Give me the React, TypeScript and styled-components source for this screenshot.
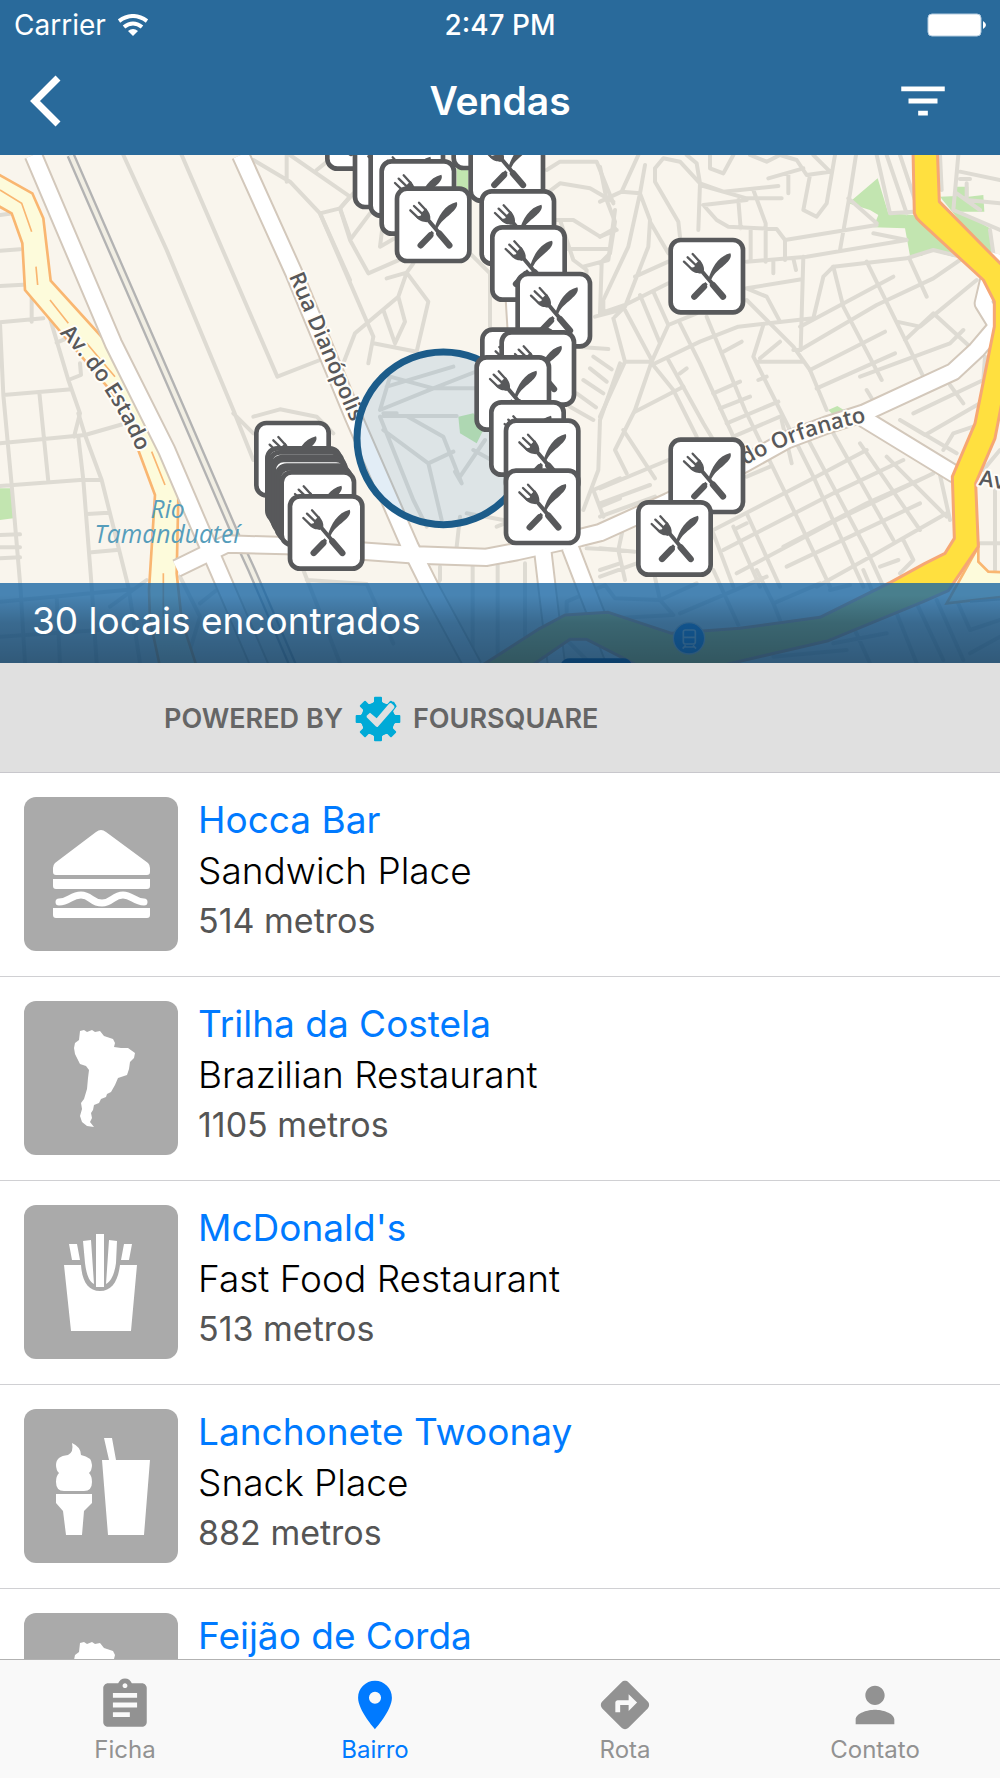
import React from "react";
import styled, { createGlobalStyle } from "styled-components";
import { MdAssignment, MdDirections, MdFilterList, MdPerson, MdPlace } from "react-icons/md";

const GlobalStyle = createGlobalStyle`
  *, *::before, *::after { box-sizing: border-box; }
  body {
    margin: 0;
    background: #fff;
    font-family: Inter, Roboto, "Liberation Sans", sans-serif;
  }
`;

const Screen = styled.div`
  display: flex;
  flex-direction: column;
  height: 100vh;
`;

const Header = styled.header`
  flex: none;
  background: #296a9b;
  color: #fff;
`;

const StatusBar = styled.div`
  display: grid;
  grid-template-columns: 1fr auto 1fr;
  align-items: center;
  height: 50px;
  padding: 0 14px;
  font-size: 28px;
  line-height: 34px;
`;

const Carrier = styled.span`
  display: flex;
  align-items: center;
  gap: 12px;
`;

const Clock = styled.time`
  font-weight: 500;
`;

const BatteryIcon = styled.svg`
  justify-self: end;
`;

const NavBar = styled.div`
  display: grid;
  grid-template-columns: 1fr auto 1fr;
  align-items: center;
  height: 105px;
  padding-bottom: 4px;
`;

const Title = styled.h1`
  margin: 0;
  font-size: 39px;
  line-height: 48px;
  font-weight: 600;
`;

const IconButton = styled.button<{ $end?: boolean }>`
  display: flex;
  justify-self: ${(p) => (p.$end ? "end" : "start")};
  padding: 0;
  margin: ${(p) => (p.$end ? "0 48px 0 0" : "0 0 0 30px")};
  border: 0;
  background: none;
  color: inherit;
  cursor: pointer;
`;

const MapPanel = styled.section`
  position: relative;
  flex: none;
  height: 508px;
  background: #f9f5ed;
`;

const MapCanvas = styled.svg`
  display: block;
  width: 100%;
  height: 100%;
`;

const ResultBanner = styled.p`
  position: absolute;
  inset: auto 0 0 0;
  margin: 0;
  padding: 14px 32px 18px;
  color: #fff;
  font-size: 37px;
  line-height: 48px;
  background:
    linear-gradient(rgba(0, 0, 0, 0) 15%, rgba(0, 0, 0, 0.2) 50%, rgba(0, 0, 0, 0.32)),
    rgba(22, 100, 163, 0.78);
`;

const Attribution = styled.div`
  flex: none;
  display: flex;
  align-items: center;
  gap: 12px;
  height: 110px;
  padding: 2px 164px 0;
  border-bottom: 1px solid #c8c7cc;
  background: #e0e0e0;
  color: #666;
  font-size: 27px;
  line-height: 32px;
  font-weight: 600;
`;

const PlaceList = styled.ul`
  flex: 1;
  min-height: 0;
  margin: 0;
  padding: 0;
  overflow-y: auto;
  scrollbar-width: none;
  list-style: none;
`;

const PlaceRow = styled.li`
  border-bottom: 1px solid #d0d0d3;
`;

const PlaceLink = styled.a`
  display: flex;
  gap: 20px;
  padding: 24px 24px 25px;
  color: #000;
  text-decoration: none;
`;

const Thumb = styled.svg`
  flex: none;
  width: 154px;
  height: 154px;
  border-radius: 12px;
  background: #aaa;
  fill: #fff;
`;

const PlaceText = styled.div`
  display: flex;
  flex-direction: column;
`;

const PlaceName = styled.span`
  color: #007aff;
  font-size: 37px;
  line-height: 46px;
`;

const PlaceKind = styled.span`
  font-size: 37px;
  line-height: 56px;
  font-weight: 300;
`;

const PlaceDistance = styled.span`
  color: #555;
  font-size: 34px;
  line-height: 44px;
`;

const TabBar = styled.nav`
  flex: none;
  display: grid;
  grid-template-columns: repeat(4, 1fr);
  height: 119px;
  border-top: 1px solid #b2b2b2;
  background: #f9f9f9;
`;

const Tab = styled.a<{ $active?: boolean }>`
  display: flex;
  flex-direction: column;
  align-items: center;
  padding-top: 16px;
  color: ${(p) => (p.$active ? "#007aff" : "#929292")};
  font-size: 24px;
  line-height: 32px;
  text-decoration: none;
`;

/* Map drawing, in units of a third of a pixel */

const Street = ({ d }: { d: string }) => (
  <path d={d} fill="none" stroke="#dedbd3" strokeWidth="12" strokeLinecap="round" strokeLinejoin="round" />
);

const avenues = [
  "M530 1705 L680 1632 L860 1637 L1250 1665 L1460 1672 L1550 1655 L1740 1613 L1800 1598 L2005 1505 L2235 1390 L2360 1320 L2480 1275 L2590 1240 L2860 1115 L2930 1050 L2985 985",
  "M100 465 L340 1030 L500 1350 L590 1560 L655 1710 L780 2000",
  "M722 465 L880 815 L1060 1250 L1230 1640 L1295 1770 L1420 2000",
  "M1628 1650 L1642 1770 L1670 2000",
  "M1710 1640 L1760 1770 L1850 2000",
  "M2590 1255 L2860 1420 L2920 1450",
  "M2985 760 L2950 910 L2990 975",
  "M1542 880 L1550 1010",
];

const pins: [number, number][] = [
  [975, 282], [1058, 397], [1105, 423], [1354, 280], [1138, 477], [1184, 559],
  [1405, 378], [1438, 567], [1470, 675], [1546, 815], [1440, 982], [1498, 990],
  [1423, 1065], [1467, 1200], [1511, 1255], [1511, 1405],
  [762, 1262], [795, 1338], [803, 1350], [810, 1364], [814, 1373], [823, 1390],
  [829, 1398], [838, 1410], [863, 1482],
  [2005, 713], [2005, 1312], [1908, 1500],
];

const Pin = ({ x, y }: { x: number; y: number }) => (
  <g transform={`translate(${x} ${y})`}>
    <rect x="7" y="7" width="217" height="217" rx="30" fill="#fff" stroke="#58595b" strokeWidth="14" />
    <g fill="none" stroke="#58595b" strokeLinecap="round">
      <path d="M47 72 L70 94 M58 59 L82 82 M73 49 L94 72" strokeWidth="7" />
      <path d="M100 100 L138 145" strokeWidth="12" />
      <path d="M134 142 L164 177" strokeWidth="19" />
      <path d="M107 147 L78 177" strokeWidth="19" />
    </g>
    <path
      d="M60 84 C64 96 76 106 88 106 L96 108 L107 98 C108 88 104 78 94 66 L82 78 L78 88 L68 90Z M119 128 C130 90 150 55 186 47 C192 58 180 72 168 82 C150 98 138 106 130 123 L124 133Z M102 142 L111 133 L118 140 L111 150Z"
      fill="#58595b"
    />
  </g>
);

const label = {
  fill: "#58585a",
  stroke: "#fffdf8",
  strokeWidth: 12,
  strokeLinejoin: "round" as const,
  paintOrder: "stroke",
  fontFamily: '"Open Sans", sans-serif',
  fontWeight: 600,
  fontSize: 66,
};

const MapDrawing = () => (
  <MapCanvas viewBox="0 465 3000 1524" preserveAspectRatio="xMidYMin slice" role="img" aria-label="Mapa">
    <g fill="#c2e5b0">
      <path d="M0 1465 H35 L40 1555 L0 1560Z" />
      <path d="M1370 505 H1405 V570 L1370 565Z" />
      <path d="M1375 1250 L1420 1240 L1455 1280 L1430 1330 L1380 1300Z" />
      <path d="M2545 610 L2633 535 L2665 640 L2740 645 L2890 760 L2860 770 L2785 750 L2765 768 L2730 768 L2715 685 L2620 682 L2635 645 L2610 630Z" />
      <path d="M2820 590 L2870 588 L2870 560 L2905 560 V590 L2950 585 L2953 635 L2880 635 L2970 685 L2980 760 L2950 750Z" />
      <path d="M2485 1230 L2512 1218 L2535 1232 L2500 1245Z" />
    </g>
    <g transform="translate(0 450)">
      <Street d="M370 15 L500 300 L700 780 L760 930 M545 15 L832 680 L960 630 M760 30 L870 95 L960 190 L1050 390 M860 15 V95 M870 15 L1050 140 M950 60 L1000 20 M960 190 L1020 175 L1050 140 M1020 175 L1050 260 M760 800 L840 778 L950 800 L1000 850 M700 790 L760 850" />
      <Street d="M0 195 L40 190 M0 302 L60 298 M0 408 L70 404 M0 517 L130 505 M95 440 V515 M0 520 L10 735 L35 1005 L62 1320 L75 1540 M10 735 L215 718 M0 880 L255 855 L370 822 M0 1008 L240 990 L300 990 M118 728 L145 995 M150 505 L205 690 L240 790 L222 860 M205 690 L243 675 L240 640 M170 578 L200 565" />
      <Street d="M235 790 L255 855 L305 990 L385 1310 L420 1540 M235 860 L250 990 L275 1310 L290 1540 M262 1092 L325 1088 M275 1207 L350 1200 M0 1155 L60 1153 M0 1192 H60 M0 1225 L60 1222 M0 1355 L400 1318 M170 1340 L180 1540 M330 1370 L440 1290 M0 1460 L300 1440 M540 1280 L600 1400 L570 1500 M600 1360 L650 1320 M920 1290 L1100 1302 L1180 1480 M910 1260 L1020 1540" />
    </g>
    <g transform="translate(720 450)">
      <Street d="M400 560 L385 640 M240 190 L400 560 M300 175 L330 270 L385 370 L500 320 M300 175 L340 130 M330 270 L390 190 M430 210 L420 290 L490 250 M440 385 L500 368 L565 455 L530 605 M500 368 L475 440 L345 550 L310 640 M475 440 L495 515 L465 580 L430 480 M400 580 L530 605 M500 368 L520 340 M690 310 L750 370 V530" />
      <Street d="M450 680 L580 715 L720 660 M440 710 L640 650 M450 680 L420 780 L580 715 H720 M430 798 H650 M430 790 L470 790 M430 840 L565 940 L640 905 M420 800 L520 1050 L560 1130 M500 798 L610 860 L665 1000 L645 965 M565 940 L605 1110 M660 980 L735 870 M700 900 L790 950 M680 1090 L790 1110 M660 1100 L650 1190 M770 1130 L820 1110" />
      <Street d="M600 1250 V1290 L580 1320 M698 1245 V1540 M773 1245 V1540 M855 1240 V1540 M920 60 L960 35 H1070 L1120 160 M920 130 L960 100 L1050 115 L1120 155 M940 210 H1000 L1080 260 L1130 240 M980 297 H1110 M1125 180 L1105 330 L1030 350 M960 210 L1000 330 L1040 360 L1035 420 M1085 340 L1080 490 M1065 500 L1140 480" />
      <Street d="M1010 590 L1105 597 M1060 620 L1115 658 M1050 655 L1100 695 M1030 690 L1090 730 M1010 730 L1068 772 M990 770 L1060 810 M1140 640 L1080 810 L1075 960 L1030 1080 M1060 1020 L1140 985 M1060 1020 L1090 1100 M1080 1070 L1140 1045 M1040 1195 L1140 1200 M1080 1260 L1140 1240" />
    </g>
    <g transform="translate(1800 450)">
      <Street d="M115 15 L65 125 L0 155 M0 50 L20 150 L45 215 L30 310 L0 340 M65 125 L120 130 L85 290 L10 450 V490 M0 260 L45 235 M0 297 H30 M135 45 L120 130 L150 210 L145 290 L75 470 L45 500 M0 490 L75 465 L205 400 M105 380 L205 335 M150 215 L205 310" />
      <Street d="M190 25 L240 35 L300 100 L295 240 M190 25 L165 55 V95 L235 215 L240 260 M260 15 L290 40 L300 100 L370 125 L535 108 M300 105 L440 145 H545 M330 15 V55 L370 70 L400 15 M310 165 L440 150 M310 165 L350 210 L385 230 L530 237 L555 270 V330 M415 150 L422 235 M460 120 L497 220 V335 M452 240 V330 M505 85 L610 55 M565 70 V130" />
      <Street d="M450 15 L500 35 L540 15 L590 30 L620 75 L690 65 L640 15 M630 75 L610 180 L650 200 L680 160 L705 15 M768 15 L750 130 L720 300 M745 145 L830 220 M555 270 L830 225 M440 335 L620 320 L920 270 L820 250 M520 330 V370 M580 325 L588 360 M610 320 L602 600 L580 600 M440 415 L605 388 M440 415 L500 440 L540 515 M440 450 L580 590 L630 660 L680 780" />
      <Street d="M205 525 L290 490 M40 505 L75 635 H155 L205 525 M75 480 L155 630 M75 635 L0 800 M155 635 L105 780 L45 900 L80 970 M120 435 L180 580 M160 425 L205 525 M155 645 L300 575 L415 530 L640 505 L670 380 L700 350 L920 325 L1000 300 L1080 320 M240 520 L300 640 L400 860 M320 500 L435 780 L600 1120 L690 1310 M370 605 L425 575 M240 670 L260 655 M205 630 L310 820 L340 870" />
      <Street d="M155 640 L220 720 L290 860 M105 785 L250 710 M490 525 L460 620 L540 780 L640 980 L790 1310 M470 635 H610 M540 575 L480 625 M475 690 L500 680 M600 600 L830 465 L1000 385 L1080 330 M700 350 L730 470 L845 690 M800 335 L970 680 M930 330 L980 440 M630 660 L855 545 M650 715 L885 610 M890 515 L960 530 L1130 390 M915 570 L1000 490 L1110 590 M780 680 L1050 580 L1090 540" />
      <Street d="M340 730 L420 695 M360 775 L450 740 M380 820 L535 755 M400 860 L540 800 M800 720 L815 745 M600 530 L880 380 M0 1015 L205 930 M0 1060 L150 1005 M0 1100 L165 1040 M70 840 L165 985 M440 980 L510 950 M340 1140 L640 985 L800 900 M370 1200 L700 1030 L910 930 M410 1270 L710 1110 L1000 970 M550 1190 L800 1060 L980 980 M560 1250 L960 1060" />
      <Street d="M650 1310 L830 1210 L1040 1090 M410 1135 L440 1120 M545 810 L575 940 M620 860 L800 1200 L850 1310 M700 850 L880 1170 M780 880 L960 1140 M860 920 L1040 1100 M910 1170 L940 1230 L900 1270 M840 1250 L895 1230 M1050 705 L1090 760 M900 810 L975 855 L1140 760 M940 790 L1150 690 L1155 620 M900 810 L1070 910 M1030 900 L1060 850 L1120 830 M1010 930 L1050 1110" />
      <Street d="M0 1195 L105 1205 M70 1130 L55 1200 L75 1290 M0 1280 L110 1240 M340 1150 L400 1310 M400 1130 L480 1310 M440 1090 L540 1310 M830 15 L870 190 L940 185 M860 15 L920 190 M900 15 L945 150 M1020 15 L1025 120 M1075 15 L1060 180 L1200 240 M1080 65 L1200 90 M1080 87 H1110 M1070 130 L1140 180 M1100 100 V150 L1200 160 M1170 240 L1180 310 M1185 1020 V1260 M1140 1180 H1200 M1150 960 L1200 900" />
    </g>
    <g transform="translate(1440 1710)">
      <Street d="M260 125 V95 L375 45 M375 45 L405 85 L540 90 L650 40 M540 90 L580 135 L400 145 M600 130 L860 20 M520 0 L540 90 M700 0 L775 165 M830 0 L880 100 L1020 40 M880 100 L900 150 M1050 60 L1110 45 M1150 0 L1180 70 M1310 100 L1390 270 M1370 90 L1450 270 M1430 90 L1470 180 L1560 150 M1250 130 L1310 280 M1060 220 L1220 190 M1120 170 L1170 280 M880 260 L1100 240 M1470 250 L1560 200 M260 210 L320 270 M350 160 L375 240" />
    </g>

    <path d="M-10 520 L97 580 L130 655 L152 842 L345 1055 L440 1200 L525 1410 L535 1490 L530 1720 L545 1860 L590 2000 H480 L450 1860 L447 1770 L465 1485 L400 1310 L330 1170 L75 870 L67 730 L35 640 L-10 615Z" fill="#fdfbdb" stroke="#f9b671" strokeWidth="8" />
    <path d="M0 570 L65 610 L95 695 M108 800 L113 855 M150 900 L205 970 M260 1030 L345 1130 M455 1355 L495 1455 M490 1720 V1850" fill="none" stroke="#f9b671" strokeWidth="5" />

    <g fill="none">
      <path d="M212 465 L545 1230 L700 1590 L755 1710 L880 2000" stroke="#b3b3b3" strokeWidth="26" />
      <path d="M212 465 L545 1230 L700 1590 L755 1710 L880 2000" stroke="#f1eee3" strokeWidth="12" />
    </g>
    <g fill="none" strokeLinejoin="round">
      {avenues.map((d) => <path key={d} d={d} stroke="#d3c8bb" strokeWidth="58" />)}
      {avenues.map((d) => <path key={d} d={d} stroke="#fff" strokeWidth="46" />)}
    </g>

    <path d="M2935 1640 L2935 1685 L2965 1715 L3010 1717 V1790 L2840 1810Z" fill="#fdfbdb" stroke="#f9b671" strokeWidth="8" />
    <path
      d="M2739 450 L2743 640 Q2748 655 2760 665 L2950 840 L2983 905 V980 L2925 1270 L2857 1430 L2863 1615 L2835 1660 L2775 1690 L2670 1748 L2460 1852 L2220 1885 L2015 1900 L1825 1837 L1695 1845 L1620 1885 L1440 2000 H1590 L1710 1918 H1760 L1920 2000 H2150 L2485 1922 L2770 1805 L2845 1772 L2935 1640 L2927 1450 L2985 1315 L3030 1080 V820 L2818 605 L2812 450Z"
      fill="#ffe03f" stroke="#f6a774" strokeWidth="9" strokeLinejoin="round"
    />
    <path d="M2910 1805 L3000 1798" stroke="#d3c8bb" strokeWidth="7" />

    <path id="estado" d="M178 1000 Q345 1175 430 1400" fill="none" />
    <path id="dianopolis" d="M866 828 L1110 1400" fill="none" />
    <path id="orfanato" d="M2236 1396 Q2400 1300 2660 1254" fill="none" />
    <text {...label}><textPath href="#estado">Av. do Estado</textPath></text>
    <text {...label}><textPath href="#dianopolis">Rua Dianópolis</textPath></text>
    <text {...label}><textPath href="#orfanato">do Orfanato</textPath></text>
    <text {...label} transform="translate(2935 1455) rotate(10)">Av.</text>
    <g fill="#569dbb" fontFamily='"Open Sans", sans-serif' fontStyle="italic" fontSize="74" textAnchor="middle">
      <text x="503" y="1553">Rio</text>
      <text x="501" y="1628">Tamanduateí</text>
    </g>

    <circle cx="1330" cy="1315" r="259" fill="rgba(62,132,197,.15)" stroke="#1c5c8a" strokeWidth="21" />
    {pins.map(([x, y]) => <Pin key={`${x}-${y}`} x={x} y={y} />)}

    <circle cx="2067" cy="1915" r="47" fill="#1878dc" stroke="#c8c8c8" strokeWidth="4" />
    <g fill="none" stroke="#c8d8e8" strokeWidth="5">
      <rect x="2050" y="1890" width="36" height="42" rx="6" />
      <path d="M2050 1912 H2086 M2057 1936 L2048 1946 M2079 1936 L2088 1946 M2054 1941 H2082" />
    </g>
    <path d="M1680 2000 Q1685 1975 1710 1975 H1870 Q1892 1975 1897 2000Z" fill="#003f85" />
  </MapCanvas>
);

const southAmerica =
  "M56 30 L60 29 L63 31 L68 29 L71 31 L76 30 L80 35 L89 38 L91 42 L90 46 L97 47 L104 47 L111 52 L110 57 L106 61 L105 68 L103 74 L94 77 L91 84 L87 91 L83 93 L82 96 L77 98 L75 102 L70 104 L69 109 L67 112 L68 117 L66 121 L70 126 L63 125 L58 121 L56 115 L58 108 L57 102 L60 98 L63 88 L64 77 L65 69 L62 65 L56 63 L51 53 L50 47 L51 42 L55 39Z";

const thumbs: Record<string, React.ReactNode> = {
  sandwich: (
    <>
      <path d="M72 35 Q77 31 82 35 L124 66 Q126 68 126 71 V75 Q126 78 123 78 H32 Q29 78 29 75 V71 Q29 68 31 66Z" />
      <path d="M29 82 H126 V89 Q126 92 123 92 H32 Q29 92 29 89Z M29 111 H126 V118 Q126 121 123 121 H32 Q29 121 29 118Z" />
      <path d="M35 105 C45 105 47 98 57 98 C67 98 67 106 78 106 C88 106 89 98 99 98 C108 98 110 105 120 105" fill="none" stroke="#fff" strokeWidth="7" strokeLinecap="round" />
    </>
  ),
  brazil: <path d={southAmerica} />,
  fries: (
    <>
      <path d="M40 60 H57 C58 76 64 86 76 86 C88 86 94 76 96 60 H113 L107 126 H47Z" />
      <path d="M72 29 H80 V82 H72Z M59 36 L67 35 L70 79 C64 76 62 66 61 58Z M93 36 L85 35 L82 79 C88 76 91 66 92 58Z M45 39 H53 L56 55 H48Z M108 39 H100 L97 55 H105Z" />
    </>
  ),
  snack: (
    <>
      <path d="M48 34 Q57 38 57 46 Q68 48 68 56 Q68 61 65 64 Q68 67 68 73 Q68 82 60 82 H40 Q32 82 32 73 Q32 67 35 64 Q32 61 32 56 Q32 47 44 46 Q50 43 48 34Z" />
      <path d="M32 85 H68 V94 L60 102 L58 126 H42 L39 102 L32 94Z M80 29 H88 L92 51 H126 L120 126 H84 L78 51 H85Z" />
    </>
  ),
};

type Place = { name: string; icon: string; kind?: string; meters?: number };

const places: Place[] = [
  { name: "Hocca Bar", kind: "Sandwich Place", meters: 514, icon: "sandwich" },
  { name: "Trilha da Costela", kind: "Brazilian Restaurant", meters: 1105, icon: "brazil" },
  { name: "McDonald's", kind: "Fast Food Restaurant", meters: 513, icon: "fries" },
  { name: "Lanchonete Twoonay", kind: "Snack Place", meters: 882, icon: "snack" },
  { name: "Feijão de Corda", icon: "brazil" },
];

const tabs = [
  { label: "Ficha", Icon: MdAssignment },
  { label: "Bairro", Icon: MdPlace, active: true },
  { label: "Rota", Icon: MdDirections },
  { label: "Contato", Icon: MdPerson },
];

const FoursquareGear = () => (
  <svg width="46" height="46" viewBox="-69 -69 138 138" aria-hidden="true">
    <g fill="#00aad7">
      <circle r="51" />
      {[0, 45, 90, 135, 180, 225, 270, 315].map((a) => (
        <path key={a} d="M-19 -44 L-12 -52 V-64 Q-12 -67 -9 -67 H9 Q12 -67 12 -64 V-52 L19 -44Z" transform={`rotate(${a})`} />
      ))}
      <path d="M26 -36 L35 -52 L48 -52 L56 -38 L40 -16Z" />
    </g>
    <path d="M-34 -10 L-24 -19 L-4 -2 L33 -46 Q38 -50 42 -46 L48 -40 Q51 -36 48 -32 L-1 24 Q-4 25 -7 22 L-34 -5Z" fill="#e0e0e0" />
  </svg>
);

export default function App() {
  return (
    <Screen>
      <GlobalStyle />
      <Header>
        <StatusBar>
          <Carrier>
            Carrier
            <svg width="30" height="22" viewBox="0 0 30 22" aria-hidden="true">
              <g fill="none" stroke="#fff" strokeWidth="4">
                <path d="M1 7 Q15 -3 29 7" />
                <path d="M6 13 Q15 6 24 13" />
              </g>
              <path d="M10 17 Q15 13 20 17 L15 22Z" fill="#fff" />
            </svg>
          </Carrier>
          <Clock>2:47 PM</Clock>
          <BatteryIcon width="59" height="24" viewBox="0 0 59 24" aria-hidden="true">
            <rect x="1" y="1" width="53" height="22" rx="4" fill="#fff" stroke="#b5cde0" />
            <path d="M56 8 Q62 12 56 16Z" fill="#fff" />
          </BatteryIcon>
        </StatusBar>
        <NavBar>
          <IconButton type="button" aria-label="Voltar">
            <svg width="32" height="52" viewBox="0 0 32 52" aria-hidden="true">
              <path d="M28 3 L5 26 L28 49" fill="none" stroke="#fff" strokeWidth="7" />
            </svg>
          </IconButton>
          <Title>Vendas</Title>
          <IconButton type="button" aria-label="Filtrar" $end>
            <MdFilterList size={58} />
          </IconButton>
        </NavBar>
      </Header>

      <MapPanel>
        <MapDrawing />
        <ResultBanner>30 locais encontrados</ResultBanner>
      </MapPanel>

      <Attribution>
        <span>POWERED BY</span>
        <FoursquareGear />
        <span>FOURSQUARE</span>
      </Attribution>

      <PlaceList>
        {places.map((place) => (
          <PlaceRow key={place.name}>
            <PlaceLink href="#">
              <Thumb viewBox="0 0 154 154" aria-hidden="true">{thumbs[place.icon]}</Thumb>
              <PlaceText>
                <PlaceName>{place.name}</PlaceName>
                {place.kind && <PlaceKind>{place.kind}</PlaceKind>}
                {place.meters && <PlaceDistance>{place.meters} metros</PlaceDistance>}
              </PlaceText>
            </PlaceLink>
          </PlaceRow>
        ))}
      </PlaceList>

      <TabBar>
        {tabs.map(({ label: text, Icon, active }) => (
          <Tab key={text} href="#" $active={active}>
            <Icon size={58} />
            {text}
          </Tab>
        ))}
      </TabBar>
    </Screen>
  );
}
